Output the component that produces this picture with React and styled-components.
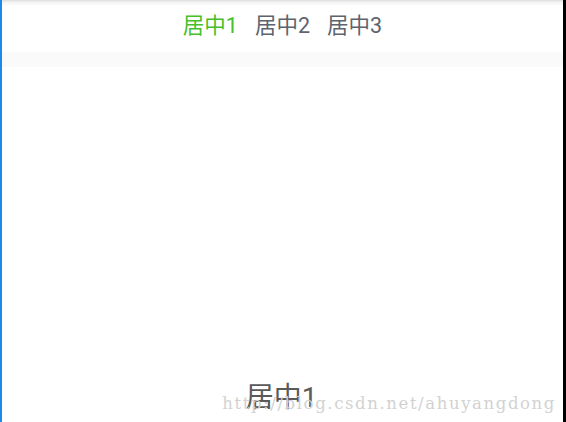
import React, { useState } from 'react';
import styled, { createGlobalStyle } from 'styled-components';

const GlobalStyle = createGlobalStyle`
  html, body, #root {
    margin: 0;
    height: 100%;
  }
  body {
    font-family: Roboto, "Noto Sans CJK SC", sans-serif;
    background: #fff;
  }
`;

const tabs = ['居中1', '居中2', '居中3'];

const App = () => {
  const [active, setActive] = useState(0);

  return (
    <>
      <GlobalStyle />
      <Frame>
        <Screen>
          <TabBar>
            {tabs.map((t, i) => (
              <Tab key={t} $active={i === active} onClick={() => setActive(i)}>
                {t}
              </Tab>
            ))}
          </TabBar>
          <Divider />
          <Page>
            <PageTitle>{tabs[active]}</PageTitle>
            <Watermark>http://blog.csdn.net/ahuyangdong</Watermark>
          </Page>
        </Screen>
      </Frame>
    </>
  );
};

const Frame = styled.div`
  height: 100%;
  display: flex;
  border-left: 2px solid #1e8ae8;
  border-right: 3px solid #000;
  box-sizing: border-box;
`;

const Screen = styled.div`
  flex: 1;
  display: flex;
  flex-direction: column;
`;

const TabBar = styled.div`
  height: 52px;
  display: flex;
  justify-content: center;
  align-items: center;
  gap: 17px;
  padding-bottom: 1px;
  box-sizing: border-box;
  background: linear-gradient(#dcdcdc 0, #f3f3f3 2px, #fff 6px);
`;

const Tab = styled.span`
  font-size: 21.5px;
  line-height: 1;
  cursor: pointer;
  color: ${(p) => (p.$active ? '#46c02a' : '#5d646d')};
`;

const Divider = styled.div`
  height: 15px;
  background: #fafafa;
`;

const Page = styled.div`
  flex: 1;
  position: relative;
  display: flex;
  align-items: flex-end;
  justify-content: center;
  padding-bottom: 10px;
`;

const PageTitle = styled.div`
  font-size: 28px;
  line-height: 1;
  color: #5a5a5a;
  margin-right: 2px;
`;

const Watermark = styled.div`
  position: absolute;
  right: 7px;
  bottom: 9px;
  font-family: "DejaVu Serif", "Liberation Serif", serif;
  font-size: 16.5px;
  letter-spacing: 1.6px;
  color: #d2d2d2;
  pointer-events: none;
`;

export default App;
